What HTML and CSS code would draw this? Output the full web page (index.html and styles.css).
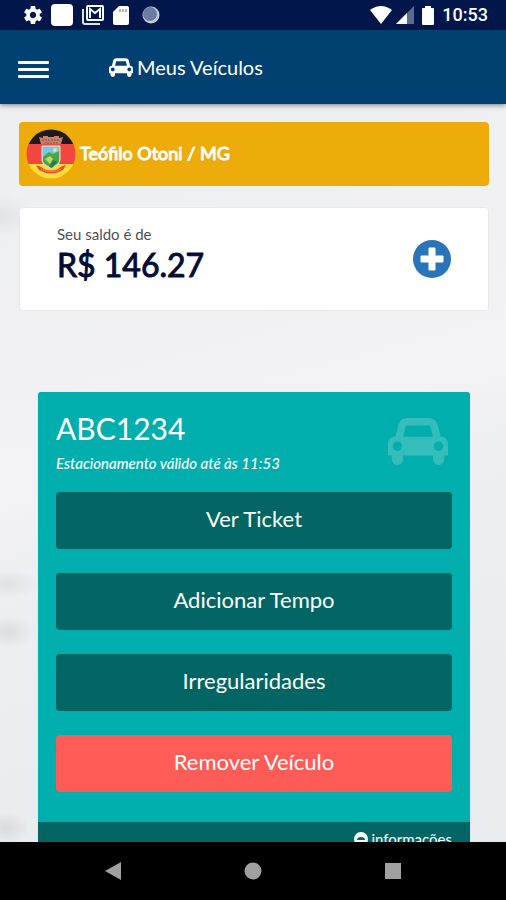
FILE: index.html
```html
<!DOCTYPE html>
<html lang="pt-BR">
<head>
<meta charset="utf-8">
<meta name="viewport" content="width=device-width, initial-scale=1">
<title>Meus Veículos</title>
<link rel="stylesheet" href="styles.css">
</head>
<body>
<svg class="defs" aria-hidden="true">
  <symbol id="car" viewBox="0 128 2048 1600">
    <path d="M480 1088q0-66-47-113t-113-47-113 47-47 113 47 113 113 47 113-47 47-113zm36-320h1016l-89-357q-2-8-14-17.500t-21-9.500h-768q-9 0-21 9.500t-14 17.500zm1372 320q0-66-47-113t-113-47-113 47-47 113 47 113 113 47 113-47 47-113zm160-96v384q0 14-9 23t-23 9h-96v128q0 80-56 136t-136 56-136-56-56-136v-128h-1024v128q0 80-56 136t-136 56-136-56-56-136v-128h-96q-14 0-23-9t-9-23v-384q0-93 65.500-158.500t158.500-65.500h28l105-419q23-94 104-157.500t179-63.500h768q98 0 179 63.500t104 157.500l105 419h28q93 0 158.500 65.500t65.500 158.500z"/>
  </symbol>
</svg>

<div class="status">
  <div class="status-icons">
    <svg width="18" height="18" viewBox="2 2 20 20" fill="#fff"><path d="M19.430 12.980c.04-.32.07-.64.07-.98s-.03-.66-.07-.98l2.110-1.650c.19-.15.24-.42.12-.64l-2-3.460c-.12-.22-.39-.3-.61-.22l-2.490 1c-.52-.4-1.080-.73-1.690-.98l-.38-2.650C14.460 2.180 14.250 2 14 2h-4c-.25 0-.46.18-.49.42l-.38 2.650c-.61.25-1.170.59-1.690.98l-2.490-1c-.23-.09-.49 0-.61.22l-2 3.460c-.13.22-.07.49.12.64l2.110 1.650c-.04.32-.07.65-.07.98s.03.66.07.98l-2.110 1.650c-.19.15-.24.42-.12.64l2 3.460c.12.22.39.3.61.22l2.490-1c.52.4 1.080.73 1.690.98l.38 2.650c.03.24.24.42.49.42h4c.25 0 .46-.18.49-.42l.38-2.650c.61-.25 1.170-.59 1.690-.98l2.490 1c.23.09.49 0 .61-.22l2-3.460c.12-.22.07-.49-.12-.64zM12 15.500c-1.930 0-3.500-1.570-3.500-3.500s1.570-3.500 3.500-3.500 3.500 1.570 3.500 3.500-1.570 3.500-3.500 3.500z"/></svg>
    <svg width="22" height="22" viewBox="0 0 22 22"><rect width="22" height="22" rx="4" fill="#fff"/></svg>
    <svg width="22" height="20" viewBox="0 0 22 20"><path d="M1 4v13q0 2 2 2h15" fill="none" stroke="#dfe4f0" stroke-width="2"/><rect x="5" y="1" width="16" height="14" rx="1" fill="none" stroke="#fff" stroke-width="2"/><path d="M8 13V4l5 4 5-4v9" fill="none" stroke="#fff" stroke-width="2"/></svg>
    <svg width="16" height="19" viewBox="0 0 16 19"><path d="M6 0h8q2 0 2 2v15q0 2-2 2H2q-2 0-2-2V6z" fill="#fff"/><path d="M7 3v3M10 3v3M13 3v3" stroke="#6b6288" stroke-width="1"/></svg>
    <svg class="sync" width="18" height="18" viewBox="0 0 18 18"><circle cx="9" cy="9" r="8.500" fill="#c3cbdd"/><circle cx="8" cy="8" r="7" fill="#6b7ba2"/></svg>
  </div>
  <div class="status-icons right">
    <svg width="22" height="18" viewBox="0 0 22 18"><path d="M0 4Q11-4 22 4L11 18z" fill="#fff"/></svg>
    <svg class="signal" width="18" height="18" viewBox="0 0 18 18"><path d="M0 18L18 0v18z" fill="#5b6c93"/><path d="M0 18L11 7v11z" fill="#fff"/></svg>
    <svg width="12" height="19" viewBox="0 0 12 19"><path d="M3 2V0h6v2h2q1 0 1 1v15q0 1-1 1H1q-1 0-1-1V3q0-1 1-1z" fill="#fff"/></svg>
    <span class="clock">10:53</span>
  </div>
</div>

<header class="topbar">
  <button class="menu" aria-label="Abrir menu"><span></span><span></span><span></span></button>
  <h1 class="title"><svg class="title-car"><use href="#car"/></svg>Meus Veículos</h1>
</header>

<main class="content">
  <section class="city">
    <svg class="crest" viewBox="0 0 50 50">
      <clipPath id="round"><circle cx="25" cy="25" r="24.500"/></clipPath>
      <g clip-path="url(#round)">
        <path fill="#211a1c" d="M0 0h50v15H0z"/>
        <path fill="#f24640" d="M0 15h50v20H0z"/>
        <path fill="#ffdc35" d="M0 35h50v15H0z"/>
      </g>
      <path d="M13 8l4 1v-2h5v1h6V7h5v2l4-1-2 7H15z" fill="#c98169"/>
      <path d="M16 11h18M18 14h14" stroke="#854a40" stroke-dasharray="2 1"/>
      <path d="M16 17h18v14q0 5-9 8-9-3-9-8z" fill="#7ac6e6" stroke="#e8e1c4"/>
      <path d="M17 28l6-5 4 2 6-3v9q0 4-8 7-8-3-8-7z" fill="#4ba34a"/>
      <path d="M19 30l5-3 3 3-3 5z" fill="#bcdc58"/>
      <circle cx="29" cy="21" r="2" fill="#e5e670"/>
      <path d="M23 38l4-7 4 2-5 6z" fill="#277c47"/>
      <path d="M10 36q6 2 8 4 7 3 14 0 3-3 8-4l-3 5q-12 7-24 0z" fill="#e44b2f"/>
      <path d="M15 40q10 5 20 0" fill="none" stroke="#ffd052" stroke-dasharray="1 1"/>
    </svg>
    <strong class="city-name">Teófilo Otoni / MG</strong>
  </section>

  <section class="balance">
    <div>
      <p class="balance-label">Seu saldo é de</p>
      <p class="balance-value">R$ 146.27</p>
    </div>
    <button class="add" aria-label="Adicionar saldo">
      <svg width="38" height="38" viewBox="0 0 38 38"><circle cx="19" cy="19" r="19" fill="#2a74b9"/><path d="M16 8h6v8h8v6h-8v8h-6v-8H8v-6h8z" fill="#fff" stroke="#fff" stroke-linejoin="round"/></svg>
    </button>
  </section>

  <article class="vehicle">
    <div class="vehicle-body">
      <div class="vehicle-head">
        <div>
          <h2 class="plate">ABC1234</h2>
          <p class="valid">Estacionamento válido até às 11:53</p>
        </div>
        <svg class="vehicle-car" aria-hidden="true"><use href="#car"/></svg>
      </div>
      <div class="actions">
        <button class="action">Ver Ticket</button>
        <button class="action">Adicionar Tempo</button>
        <button class="action">Irregularidades</button>
        <button class="action danger">Remover Veículo</button>
      </div>
    </div>
    <a class="info" href="#informacoes">
      <svg width="14" height="14" viewBox="0 0 14 14"><circle cx="7" cy="7" r="7" fill="#fff"/><path d="M3 8q0-3 4-3t4 3z" fill="#016663"/></svg>informações
    </a>
  </article>
</main>

<nav class="system">
  <button aria-label="Voltar"><svg width="16" height="18" viewBox="0 0 16 18"><path d="M0 9L16 0v18z"/></svg></button>
  <button aria-label="Início"><svg width="18" height="18" viewBox="0 0 18 18"><circle cx="9" cy="9" r="8.500"/></svg></button>
  <button aria-label="Recentes"><svg width="16" height="16" viewBox="0 0 16 16"><path d="M0 0h16v16H0z"/></svg></button>
</nav>
</body>
</html>
```
FILE: styles.css
```css
* { box-sizing: border-box; }

body {
  margin: 0;
  height: 100vh;
  display: flex;
  flex-direction: column;
  overflow: hidden;
  font-family: Lato, "Liberation Sans", sans-serif;
  background: #eeeff1;
}

h1, h2, p { margin: 0; font-weight: 400; }
svg { display: block; flex: none; }
button { border: 0; padding: 0; background: none; font: inherit; color: inherit; cursor: pointer; }

.defs { position: absolute; width: 0; height: 0; }

.status {
  flex: none;
  height: 30px;
  padding: 0 18px 0 24px;
  display: flex;
  align-items: center;
  justify-content: space-between;
  background: #01174b;
  color: #fff;
}
.status-icons { display: flex; align-items: center; gap: 9px; }
.sync { margin-left: 4px; }
.status-icons.right { gap: 8px; }
.signal { margin-left: -4px; }
.clock { font: 500 18px/32px Roboto, sans-serif; }

.topbar {
  flex: none;
  height: 74px;
  padding: 0 18px;
  display: flex;
  align-items: center;
  gap: 60px;
  background: #014171;
  color: #fff;
  box-shadow: 0 1px 5px rgba(0, 0, 0, .5);
  z-index: 1;
}
.menu { width: 31px; display: grid; gap: 4px; margin-top: 4px; }
.menu span { height: 3px; border-radius: 1px; background: #fff; }
.title { display: flex; align-items: center; gap: 4px; font-size: 20px; line-height: 24px; }
.title-car { width: 24px; height: 19px; fill: #fff; }

.content {
  flex: 1;
  min-height: 0;
  overflow: hidden;
  padding: 18px 17px 0 19px;
  background:
    radial-gradient(ellipse 40px 22px at 0 112px, #e0e3e6, transparent),
    radial-gradient(ellipse 30px 14px at 10px 480px, #dfe1e4, transparent),
    radial-gradient(ellipse 26px 16px at 10px 528px, #dbdde0, transparent),
    radial-gradient(ellipse 24px 16px at 6px 724px, #d9dcde, transparent),
    linear-gradient(165deg, #edeff1, #f3f2f4 45%, #eceef1 60%, #e8ebee);
}

.city {
  height: 64px;
  padding: 0 7px;
  display: flex;
  align-items: center;
  gap: 4px;
  border-radius: 4px;
  background: #eeac0b;
  color: #fff;
  font-size: 18px;
}
.city-name { padding-bottom: 2px; font-weight: 400; -webkit-text-stroke: 1px #fff; }
.crest { width: 50px; height: 50px; }

.balance {
  margin-top: 21px;
  min-height: 104px;
  padding: 0 37px;
  display: flex;
  align-items: center;
  justify-content: space-between;
  border: 1px solid #e7e9eb;
  border-radius: 4px;
  background: #fff;
}
.balance-label { font-size: 15px; line-height: 18px; color: #4d4f58; }
.balance-value { margin-bottom: 6px; font-size: 32px; line-height: 44px; color: #020c36; -webkit-text-stroke: 1px #020c36; }

.vehicle {
  margin: 81px 19px 0;
  border-radius: 3px;
  overflow: hidden;
  background: #00aead;
  color: #fff;
  box-shadow: 0 0 2px #cbe0f5;
}
.vehicle-body { padding: 17px 18px 30px; }
.vehicle-head { display: flex; justify-content: space-between; margin-bottom: 19px; }
.plate { font-size: 30px; line-height: 38px; }
.valid { margin-top: 6px; font-size: 15px; line-height: 20px; font-style: italic; font-weight: 500; }
.vehicle-car { width: 60px; height: 47px; margin: 9px 4px 0 0; fill: #35bdbc; }

.actions { display: grid; gap: 24px; }
.action {
  height: 57px;
  padding-bottom: 4px;
  border-radius: 4px;
  background: #016663;
  font-size: 22px;
}
.danger { background: #ff5b57; }

.info {
  display: flex;
  align-items: center;
  justify-content: flex-end;
  gap: 3px;
  padding: 8px 18px;
  background: #016663;
  color: #fff;
  font-size: 15px;
  line-height: 18px;
  text-decoration: none;
}

.system {
  flex: none;
  height: 58px;
  display: flex;
  align-items: center;
  justify-content: center;
  gap: 123px;
  background: #000;
  z-index: 1;
}
.system svg { fill: #a0a0a0; }
```
